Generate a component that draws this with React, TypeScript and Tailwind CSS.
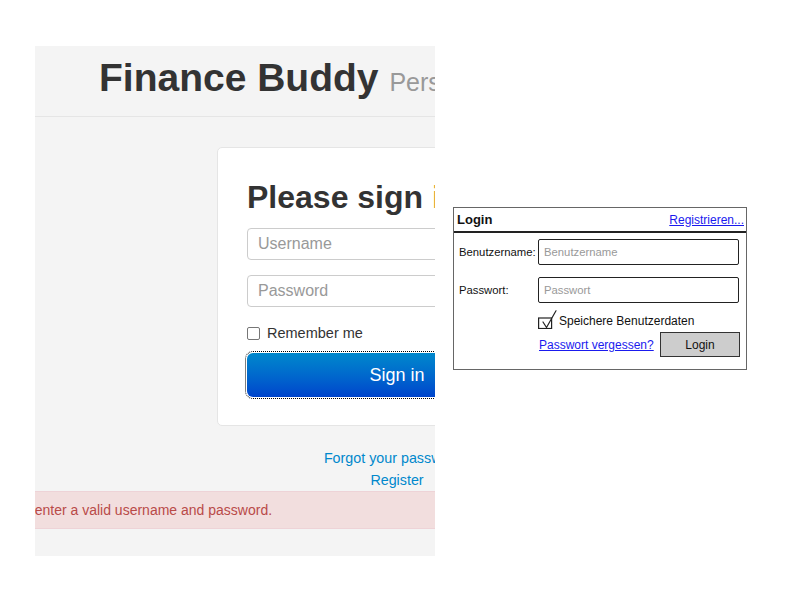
import React from 'react';

// linke Seite: Ausschnitt der fertigen Login-Seite
function SitePreview() {
  return (
    <div className="w-[400px] h-[510px] bg-[#f4f4f4] overflow-hidden shrink-0">
      <div className="w-[700px]">
        <div className="h-[71px] border-b border-[#e5e5e5] pl-[64px] pt-[12px] whitespace-nowrap">
          <h1 className="text-[39px] leading-[39px] font-bold text-[#333]">
            Finance Buddy{' '}
            <span className="text-[25px] font-normal text-[#999]">Personal Finance</span>
          </h1>
        </div>

        <div className="mt-[30px] ml-[182px] w-[360px] bg-white border border-[#e5e5e5] rounded-[5px] pt-[19px] px-[29px] pb-[28px]">
          <h2 className="mt-[10px] mb-[11px] text-[32px] leading-[40px] font-bold text-[#333] whitespace-nowrap">
            Please sign <span className="text-[#d8a03c]">i</span>n
          </h2>
          <div className="h-[32px] mb-[15px] border border-[#ccc] rounded-[4px] bg-white px-[10px] flex items-center text-[16px] text-[#999]">
            Username
          </div>
          <div className="h-[32px] mb-[15px] border border-[#ccc] rounded-[4px] bg-white px-[10px] flex items-center text-[16px] text-[#999]">
            Password
          </div>
          <label className="h-[23px] mb-[8px] flex items-center gap-[7px] text-[14.5px] text-[#333]">
            <span className="w-[13px] h-[13px] border border-[#767676] rounded-[2px] bg-white" />
            Remember me
          </label>
          <button className="w-full h-[44px] rounded-[6px] bg-gradient-to-b from-[#0088cc] to-[#0044cc] text-white text-[18px] outline-1 outline-dotted outline-black outline-offset-[1px]">
            Sign in
          </button>
        </div>

        <div className="mt-[21px] ml-[182px] w-[360px] text-center text-[14.3px] leading-[22px] text-[#0088cc]">
          <div>Forgot your password?</div>
          <div>Register</div>
        </div>

        <div className="ml-[-62px] w-[700px] bg-[#f2dede] border border-[#eed3d7] px-[14px] py-[8px] text-[14px] leading-[20px] text-[#b94a48] whitespace-nowrap">
          Please enter a valid username and password.
        </div>
      </div>
    </div>
  );
}

// rechte Seite: Wireframe des Login-Dialogs
function Wireframe() {
  const field = 'h-[26px] w-[201px] border border-[#222] rounded-[2px] bg-white flex items-center px-[5px] text-[11.3px] text-[#999]';
  return (
    <div className="w-[294px] h-[163px] border border-[#666] bg-white text-[#111] shrink-0">
      <div className="h-[25px] border-b-2 border-[#222] flex items-center justify-between pl-[3px] pr-[2px]">
        <span className="text-[13px] font-bold">Login</span>
        <span className="text-[12px] text-[#1a1aee] underline">Registrieren...</span>
      </div>

      <div className="mt-[6px] flex items-center">
        <span className="w-[84px] pl-[5px] text-[11.3px]">Benutzername:</span>
        <div className={field}>Benutzername</div>
      </div>
      <div className="mt-[12px] flex items-center">
        <span className="w-[84px] pl-[5px] text-[11.3px]">Passwort:</span>
        <div className={field}>Passwort</div>
      </div>

      <div className="mt-[6px] ml-[84px] flex items-center gap-[2px]">
        <svg width="19" height="19" viewBox="0 0 19 19" fill="none" stroke="#222" strokeWidth="1.2">
          <rect x="0.6" y="8" width="13" height="10.5" />
          <path d="M5 12 L8.5 17.5 L18 0.8" strokeLinecap="round" strokeLinejoin="round" />
        </svg>
        <span className="text-[12px] mt-[3px]">Speichere Benutzerdaten</span>
      </div>

      <div className="mt-[2px] ml-[85px] flex items-center justify-between pr-[6px]">
        <span className="text-[12px] text-[#1a1aee] underline">Passwort vergessen?</span>
        <div className="w-[80px] h-[25px] border border-[#333] bg-[#cdcdcd] flex items-center justify-center text-[12px]">
          Login
        </div>
      </div>
    </div>
  );
}

export default function App() {
  return (
    <div className="w-[800px] h-[600px] bg-white flex items-start" style={{ fontFamily: '"Liberation Sans", Arial, sans-serif' }}>
      <div className="ml-[35px] mt-[46px]">
        <SitePreview />
      </div>
      <div className="ml-[18px] mt-[207px]">
        <Wireframe />
      </div>
    </div>
  );
}
